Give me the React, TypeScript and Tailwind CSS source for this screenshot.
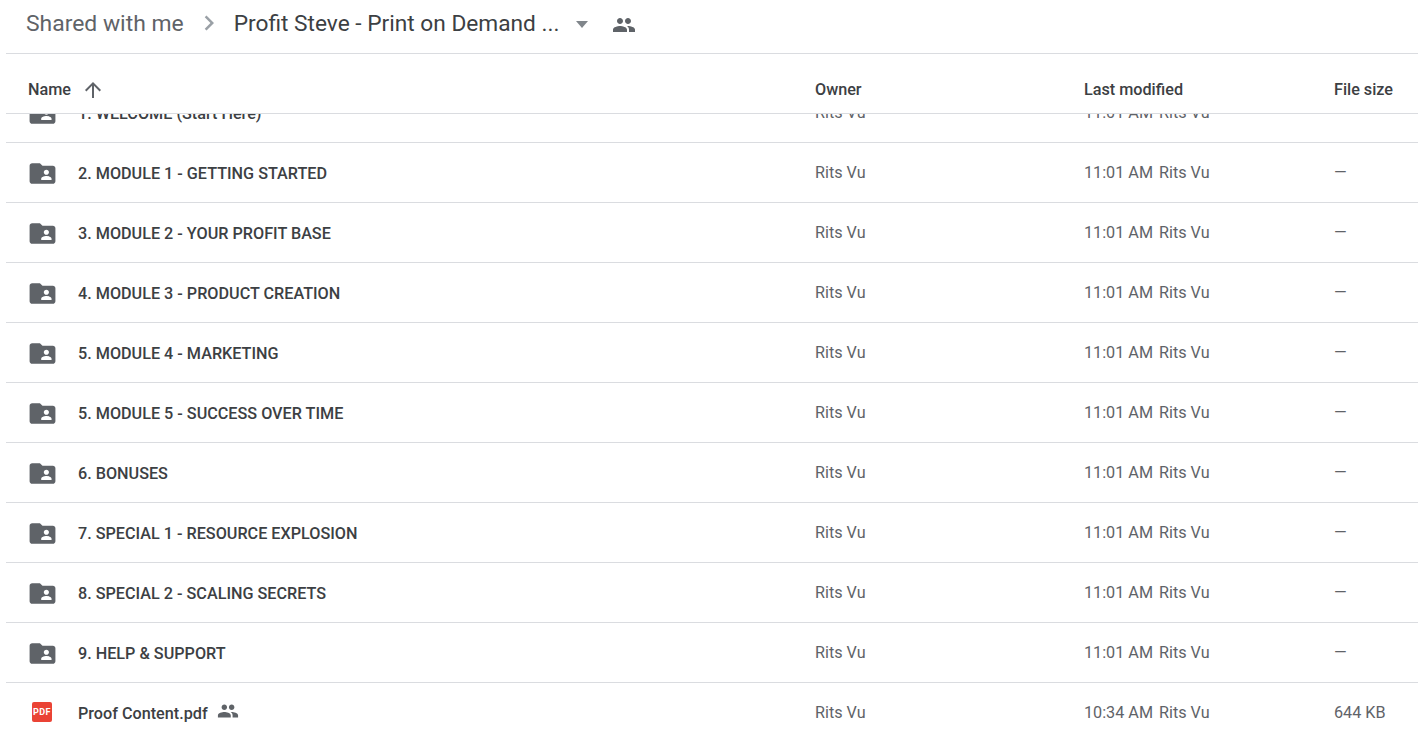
import React from 'react';

const FOLDER_PATH =
  'M20 6h-8l-2-2H4c-1.1 0-1.99.9-1.99 2L2 18c0 1.1.9 2 2 2h16c1.1 0 2-.9 2-2V8c0-1.1-.9-2-2-2zm-5 3c1.1 0 2 .9 2 2s-.9 2-2 2-2-.9-2-2 .9-2 2-2zm4 8h-8v-1c0-1.33 2.67-2 4-2s4 .67 4 2v1z';
const PEOPLE_PATH =
  'M16 11c1.66 0 2.99-1.34 2.99-3S17.66 5 16 5c-1.66 0-3 1.34-3 3s1.34 3 3 3zm-8 0c1.66 0 2.99-1.34 2.99-3S9.66 5 8 5C6.34 5 5 6.34 5 8s1.34 3 3 3zm0 2c-2.33 0-7 1.17-7 3.5V19h14v-2.5c0-2.33-4.67-3.5-7-3.5zm8 0c-.29 0-.62.02-.97.05 1.16.84 1.97 1.97 1.97 3.45V19h6v-2.5c0-2.33-4.67-3.5-7-3.5z';

const folders = [
  '1. WELCOME (Start Here)',
  '2. MODULE 1 - GETTING STARTED',
  '3. MODULE 2 - YOUR PROFIT BASE',
  '4. MODULE 3 - PRODUCT CREATION',
  '5. MODULE 4 - MARKETING',
  '5. MODULE 5 - SUCCESS OVER TIME',
  '6. BONUSES',
  '7. SPECIAL 1 - RESOURCE EXPLOSION',
  '8. SPECIAL 2 - SCALING SECRETS',
  '9. HELP & SUPPORT',
];

const FolderIcon = () => (
  <svg viewBox="0 0 24 24" className="w-[31px] h-[31px] fill-[#5f6368]">
    <path d={FOLDER_PATH} />
  </svg>
);

const PdfIcon = () => (
  <div className="-mt-[2px] w-5 h-5 rounded-[2px] bg-[#ea4335] flex items-center justify-center text-white text-[9px] font-bold leading-none tracking-[0.4px]">
    PDF
  </div>
);

const Row = ({
  name,
  icon,
  modified,
  size,
  shared,
}: {
  name: string;
  icon: React.ReactNode;
  modified: string;
  size: string;
  shared?: boolean;
}) => (
  <div className="grid grid-cols-[809px_269px_250px_1fr] h-[60px] items-center border-b border-[#dadce0] pt-[2px] text-[16.2px]">
    <div className="flex items-center">
      <div className="w-[72px] flex justify-center shrink-0">{icon}</div>
      <span className="mt-[2px] font-medium text-[#3c4043]">{name}</span>
      {shared && (
        <svg viewBox="0 0 24 24" className="ml-[9px] -mt-[5px] w-[22px] h-[22px] fill-[#5f6368]">
          <path d={PEOPLE_PATH} />
        </svg>
      )}
    </div>
    <span className="text-[#5f6368]">Rits Vu</span>
    <span className="text-[#5f6368]">
      {modified}
      <span className="ml-[6px]">Rits Vu</span>
    </span>
    <span className="text-[#5f6368]">{size}</span>
  </div>
);

export default function App() {
  return (
    <div className="h-screen overflow-hidden bg-white pl-[6px] font-['Roboto',sans-serif]">
      {/* Breadcrumb */}
      <div className="h-[54px] border-b border-[#dadce0] flex items-center pl-5 pb-[4px]">
        <span className="text-[22.9px] text-[#5f6368]">Shared with me</span>
        <svg viewBox="0 0 24 24" className="ml-[10px] -mt-[4px] w-[30px] h-[30px] fill-[#9aa0a6]">
          <path d="M8.59 16.59L13.17 12 8.59 7.41 10 6l6 6-6 6z" />
        </svg>
        <span className="ml-[10px] text-[22.7px] text-[#3c4043]">Profit Steve - Print on Demand ...</span>
        <svg viewBox="0 0 24 24" className="ml-[11px] -mt-[1px] w-6 h-6 fill-[#80868b]">
          <path d="M6 9h12l-6 7z" />
        </svg>
        <svg viewBox="0 0 24 24" className="ml-[18px] mt-[1px] w-6 h-6 fill-[#5f6368]">
          <path d={PEOPLE_PATH} />
        </svg>
      </div>

      {/* Column headers */}
      <div className="grid grid-cols-[809px_269px_250px_1fr] h-[60px] items-center border-b border-[#dadce0] pt-[14px] text-[16.2px] font-medium text-[#3c4043]">
        <div className="flex items-center pl-[22px]">
          <span>Name</span>
          <svg viewBox="0 0 24 24" className="ml-[10px] w-6 h-6 fill-[#5f6368]">
            <path d="M4 12l1.41 1.41L11 7.83V20h2V7.83l5.58 5.59L20 12l-8-8-8 8z" />
          </svg>
        </div>
        <span>Owner</span>
        <span>Last modified</span>
        <span>File size</span>
      </div>

      {/* File list, scrolled so the first row sits under the header */}
      <div className="h-[621px] overflow-hidden">
        <div className="-mt-[31px]">
          {folders.map((name) => (
            <Row key={name} name={name} icon={<FolderIcon />} modified="11:01 AM" size="—" />
          ))}
          <Row name="Proof Content.pdf" icon={<PdfIcon />} modified="10:34 AM" size="644 KB" shared />
        </div>
      </div>
    </div>
  );
}
